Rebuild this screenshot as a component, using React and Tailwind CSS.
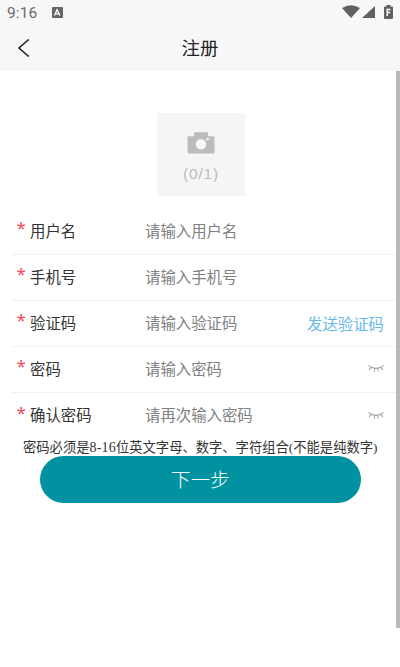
import React from 'react';

const fields = [
  { label: '用户名', placeholder: '请输入用户名' },
  { label: '手机号', placeholder: '请输入手机号' },
  { label: '验证码', placeholder: '请输入验证码', action: '发送验证码' },
  { label: '密码', placeholder: '请输入密码', secret: true },
  { label: '确认密码', placeholder: '请再次输入密码', secret: true },
];

const ClosedEye = () => (
  <svg className="mb-px" width="16" height="9" viewBox="0 0 16 9" fill="none" stroke="#a3a3a3" strokeWidth="1.1" strokeLinecap="round">
    <path d="M1 1.5C4.5 5.3 11.5 5.3 15 1.5M3.3 3.5L1.2 5.7M6.5 4.5v2.7M9.8 4.5l.4 2.5M12.7 3.5l2.1 2.2" />
  </svg>
);

const StatusBar = () => (
  <div className="flex h-[25px] items-center px-[7px] text-[#6b6b6b]">
    <span className="w-[45px] pt-[2px] font-[Roboto] text-[15.5px] leading-none tracking-[0.1px]">9:16</span>
    <svg className="mb-px" width="11" height="11" viewBox="0 0 11 11">
      <rect width="11" height="11" rx="1" fill="#666" />
      <path d="M2.5 8.5L5 2.8l3 5.7M3.7 6.8h3.5" fill="none" stroke="#fff" strokeWidth="1.3" />
    </svg>
    <div className="mb-[2px] ml-auto flex items-center">
      <svg width="18" height="13" viewBox="0 0 18 13">
        <path d="M0 3Q9-2.4 18 3L9 13z" fill="#606060" />
      </svg>
      <svg className="ml-[2px]" width="13" height="12" viewBox="0 0 13 12">
        <path d="M13 0v12H0z" fill="#606060" />
      </svg>
      <svg className="ml-[9px]" width="9" height="14" viewBox="0 0 9 14">
        <path d="M2.5 0h4v1.4H8q1 0 1 1V13q0 1-1 1H1q-1 0-1-1V2.4q0-1 1-1h1.5z" fill="#606060" />
        <path d="M3.2 11V4.5h3.3M3.2 7.5h3" fill="none" stroke="#fff" strokeWidth="1.4" />
      </svg>
    </div>
  </div>
);

const FieldRow = ({ label, placeholder, action, secret, last }) => (
  <div className={`flex h-[45.9px] items-center pr-3 text-[15.4px] ${last ? '' : 'border-b border-[#f1f1f1]'}`}>
    <span className="mb-[7px] w-[18px] pl-[4.5px] font-['Noto_Sans'] text-[17px] leading-none text-[#f5455c]">*</span>
    <span className="mb-[2px] w-[115px] text-[#333]">{label}</span>
    <span className="mb-[2px] flex-1 text-[#808080]">{placeholder}</span>
    {action && <span className="text-[#68b8e8]">{action}</span>}
    {secret && <ClosedEye />}
  </div>
);

const App = () => {
  return (
    <div className="h-[667px] w-[400px] overflow-hidden bg-white font-['Noto_Sans_CJK_SC',sans-serif]">
      <header className="h-[71px] bg-[#f7f7f7]">
        <StatusBar />
        <div className="grid h-[46px] grid-cols-[1fr_auto_1fr] items-center">
          <svg className="ml-[18px]" width="12" height="18" viewBox="0 0 12 18" fill="none" stroke="#222" strokeWidth="1.5">
            <path d="M10.8.5L1 9l9.8 8.5" />
          </svg>
          <h1 className="pb-[2px] text-[18.4px] leading-none text-[#222]">注册</h1>
        </div>
      </header>

      <div className="flex h-[557px]">
        <main className="flex-1">
          <div className="ml-[157px] mt-[42px] flex h-[83px] w-[88px] flex-col items-center bg-[#f5f5f5] pt-[19px] text-[#bcbcbc]">
            <svg width="28" height="22" viewBox="0 0 28 22">
              <path d="M1.5 4.2H7V1.2Q7 .2 8 .2h12q1 0 1 1v3h5.5q1 0 1 1V20.5q0 1-1 1h-25q-1 0-1-1V5.2q0-1 1-1z" fill="#bcbcbc" />
              <circle cx="14" cy="12.3" r="5.2" fill="#f8f8f8" />
              <circle cx="20.5" cy="7.3" r="1.3" fill="#f8f8f8" />
            </svg>
            <span className="mt-[10px] font-['Liberation_Sans',sans-serif] text-[15.5px] leading-5 tracking-[0.8px]">(0/1)</span>
          </div>

          <div className="ml-3 mt-[13px]">
            {fields.map((field, i) => (
              <FieldRow key={field.label} {...field} last={i === fields.length - 1} />
            ))}
          </div>

          <p className="ml-[23px] h-[18px] whitespace-nowrap font-['Liberation_Serif','Noto_Sans_CJK_SC',serif] text-[13.3px] leading-[20px] text-[#333]">
            密码必须是<span className="text-[14px] tracking-[0.2px]">8-16</span>位英文字母、数字、字符组合(不能是纯数字)
          </p>
          <button className="ml-10 block h-[47px] w-[321px] rounded-full bg-[#0092a0] pb-[3px] text-[19.6px] font-light leading-none text-white">
            下一步
          </button>
        </main>
        <div className="w-1 bg-[#b9b9b9]" />
      </div>
    </div>
  );
};

export default App;
